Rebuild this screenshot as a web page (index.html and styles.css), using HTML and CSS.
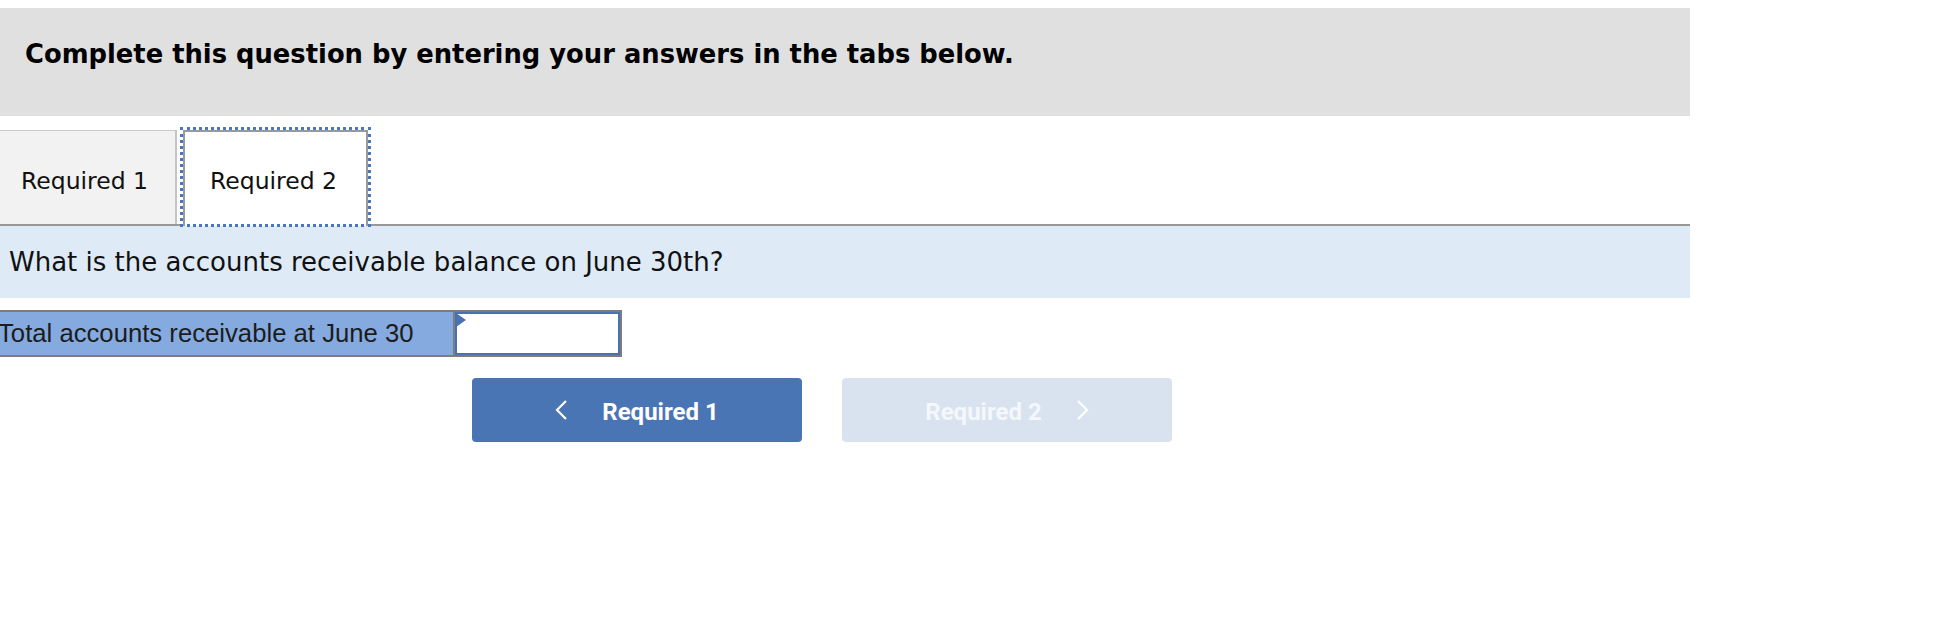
FILE: index.html
```html
<!DOCTYPE html>
<html>
<head>
<meta charset="utf-8">
<link rel="stylesheet" href="styles.css">
</head>
<body>
<div class="page">
  <div class="header">
    <h2 class="header-title">Complete this question by entering your answers in the tabs below.</h2>
  </div>
  <div class="tabs">
    <div class="tab">Required 1</div>
    <div class="tab active">Required 2</div>
  </div>
  <div class="question">What is the accounts receivable balance on June 30th?</div>
  <div class="answer-row">
    <div class="answer-label">Total accounts receivable at June 30</div>
    <div class="answer-input"><span class="flag"></span></div>
  </div>
  <div class="nav">
    <button class="nav-btn prev">
      <svg class="chev" width="12" height="20" viewBox="0 0 12 20"><path d="M11 1 L2 10 L11 19" fill="none" stroke="#fff" stroke-width="2.2" stroke-linejoin="miter"/></svg>
      <span>Required 1</span>
    </button>
    <button class="nav-btn next" disabled>
      <span>Required 2</span>
      <svg class="chev" width="12" height="20" viewBox="0 0 12 20"><path d="M1 1 L10 10 L1 19" fill="none" stroke="#fff" stroke-width="2.2" stroke-linejoin="miter"/></svg>
    </button>
  </div>
</div>
</body>
</html>
```

FILE: styles.css
```css
html, body {
  margin: 0;
  padding: 0;
  background: #fff;
}

body {
  font-family: "DejaVu Sans", Verdana, sans-serif;
  color: #000;
  overflow: hidden;
}

.page {
  width: 1690px;
  padding-top: 8px;
}

.header {
  background: #e0e0e0;
  height: 108px;
  box-sizing: border-box;
  padding: 31px 0 0 25px;
}

.header-title {
  margin: 0;
  font-family: "DejaVu Sans", Verdana, sans-serif;
  font-weight: bold;
  font-size: 25.8px;
  line-height: 30px;
}

.tabs {
  display: flex;
  align-items: flex-end;
  padding-top: 14px;
  margin-left: -6px;
  border-bottom: 2px solid #999;
}

.tab {
  height: 94px;
  box-sizing: border-box;
  display: flex;
  align-items: center;
  padding: 6px 27px 0 27px;
  font-size: 23.5px;
  color: #111;
  background: #f2f2f2;
  border-top: 1px solid #cacaca;
  border-right: 2px solid #c4c4c4;
}

.tab.active {
  position: relative;
  margin-left: 6px;
  height: 96px;
  margin-bottom: -2px;
  padding: 6px 29px 2px 25px;
  background: #fff;
  border: 2px solid #999;
  border-bottom: none;
}

.tab.active::after {
  content: "";
  position: absolute;
  left: -5px;
  right: -5px;
  top: -5px;
  bottom: -1px;
  border: 3px dotted #4a76bd;
}

.question {
  background: #deebf7;
  height: 72px;
  box-sizing: border-box;
  padding: 1px 0 0 9px;
  line-height: 71px;
  font-size: 26px;
  color: #111;
}

.answer-row {
  display: flex;
  width: fit-content;
  margin-top: 12px;
  margin-left: -10px;
  height: 47px;
  box-sizing: border-box;
  border-top: 2px solid #7d7d7d;
  border-bottom: 2px solid #7d7d7d;
  border-right: 2px solid #7d7d7d;
}

.answer-label {
  width: 465px;
  box-sizing: border-box;
  padding-left: 8px;
  background: #84aadf;
  display: flex;
  align-items: center;
  font-family: "Liberation Sans", Arial, sans-serif;
  font-size: 25.7px;
  color: #1c1c1c;
  border-right: 2px solid #7d7d7d;
}

.answer-input {
  position: relative;
  width: 165px;
  box-sizing: border-box;
  background: #fff;
  border: 2px solid #4a72b2;
}

.flag {
  position: absolute;
  left: -1px;
  top: -1px;
  width: 0;
  height: 0;
  border-top: 7px solid transparent;
  border-bottom: 7px solid transparent;
  border-left: 10px solid #4a72b2;
}

.nav {
  display: flex;
  gap: 40px;
  padding-left: 472px;
  margin-top: 21px;
}

.nav-btn {
  width: 330px;
  height: 64px;
  border: none;
  border-radius: 4px;
  display: flex;
  align-items: center;
  justify-content: center;
  gap: 35px;
  padding: 3px 0 0 0;
  font-family: Roboto, "Liberation Sans", sans-serif;
  font-weight: bold;
  font-size: 24px;
  color: #fff;
}

.nav-btn.prev {
  background: #4a75b4;
}

.nav-btn.next {
  background: #d9e3ef;
  color: #f4f7fb;
}

.chev {
  display: block;
  margin-top: -3px;
}
```
